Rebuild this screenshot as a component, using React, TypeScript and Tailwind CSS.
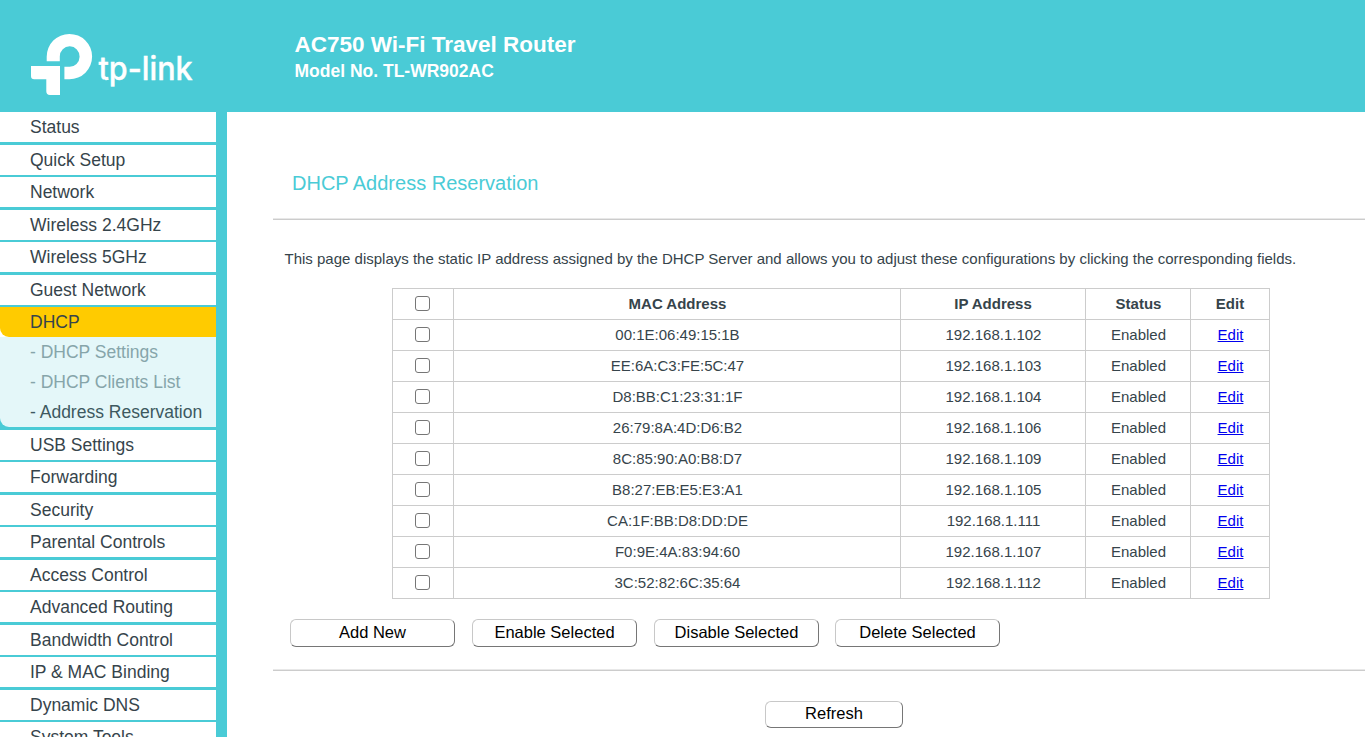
type NavEntry = { label: string; gap: string };

const navTop: NavEntry[] = [
  { label: 'Status', gap: 'mb-[3px]' },
  { label: 'Quick Setup', gap: 'mb-[2px]' },
  { label: 'Network', gap: 'mb-[3px]' },
  { label: 'Wireless 2.4GHz', gap: 'mb-[2px]' },
  { label: 'Wireless 5GHz', gap: 'mb-[3px]' },
  { label: 'Guest Network', gap: 'mb-[2px]' },
];

const navBottom: NavEntry[] = [
  { label: 'USB Settings', gap: 'mb-[2px]' },
  { label: 'Forwarding', gap: 'mb-[3px]' },
  { label: 'Security', gap: 'mb-[2px]' },
  { label: 'Parental Controls', gap: 'mb-[3px]' },
  { label: 'Access Control', gap: 'mb-[2px]' },
  { label: 'Advanced Routing', gap: 'mb-[3px]' },
  { label: 'Bandwidth Control', gap: 'mb-[2px]' },
  { label: 'IP & MAC Binding', gap: 'mb-[3px]' },
  { label: 'Dynamic DNS', gap: 'mb-[2px]' },
  { label: 'System Tools', gap: 'mb-[3px]' },
];

const reservations = [
  ['00:1E:06:49:15:1B', '192.168.1.102'],
  ['EE:6A:C3:FE:5C:47', '192.168.1.103'],
  ['D8:BB:C1:23:31:1F', '192.168.1.104'],
  ['26:79:8A:4D:D6:B2', '192.168.1.106'],
  ['8C:85:90:A0:B8:D7', '192.168.1.109'],
  ['B8:27:EB:E5:E3:A1', '192.168.1.105'],
  ['CA:1F:BB:D8:DD:DE', '192.168.1.111'],
  ['F0:9E:4A:83:94:60', '192.168.1.107'],
  ['3C:52:82:6C:35:64', '192.168.1.112'],
];

function Logo() {
  return (
    <svg width="170" height="66" viewBox="28 32 170 66" fill="#fff" className="block">
      <path d="M46.7 61.3V56.7A22.7 22.7 0 1 1 69.4 79.3H64.4V66.7H69.4A9.9 10.2 0 1 0 59.8 56.5V61.3Z" />
      <path d="M31 66H60V95H50Q46.3 95 46.3 91.3V79.3H34.2Q31 79.3 31 76Z" />
      <text
        x="98.5"
        y="79.5"
        fontSize="32"
        fontWeight="500"
        stroke="#fff"
        strokeWidth="0.4"
        textLength="94"
        lengthAdjust="spacingAndGlyphs"
        fontFamily="Inter, sans-serif"
      >
        tp-link
      </text>
    </svg>
  );
}

function NavItem({ label, gap }: NavEntry) {
  return (
    <li className={`h-[30px] shrink-0 bg-white pl-[30px] leading-[30px] ${gap}`}>
      <a href="#">{label}</a>
    </li>
  );
}

function Checkbox() {
  return (
    <input
      type="checkbox"
      className="mr-auto mb-px ml-[22px] block size-[15px] appearance-none rounded-[3px] border border-[#767676] bg-white"
    />
  );
}

function Divider() {
  return <div className="h-[2px] border-t border-b border-t-[#e8e8e8] border-b-[#cccccc]" />;
}

function Button({ label, size }: { label: string; size: string }) {
  return (
    <button
      className={`rounded-[6px] border border-t-[#c8c8c8] border-r-[#767676] border-b-[#767676] border-l-[#c8c8c8] bg-white text-[16.5px] leading-none text-black ${size}`}
    >
      {label}
    </button>
  );
}

const cell = 'border border-[#cccccc] p-0 text-center';
const textCell = 'border border-[#cccccc] p-0 pl-px text-center';

export default function App() {
  return (
    <div className="flex h-[737px] w-[1365px] flex-col overflow-hidden bg-white font-['Liberation_Sans',Arial,sans-serif] text-[#36444b]">
      <header className="flex h-28 shrink-0 bg-[#4acbd6] text-white">
        <div className="w-[294.5px] shrink-0 pt-8 pl-7">
          <Logo />
        </div>
        <div className="pt-[31px] font-bold">
          <h1 className="text-[22.5px] leading-[27px]">AC750 Wi-Fi Travel Router</h1>
          <h2 className="pt-px text-[17.5px] leading-6">Model No. TL-WR902AC</h2>
        </div>
      </header>

      <div className="flex min-h-0 flex-1">
        <nav className="w-[227px] shrink-0 overflow-hidden bg-[#4acbd6] pr-[11px] text-[17.5px]">
          <ul className="flex flex-col">
            {navTop.map((item) => (
              <NavItem key={item.label} {...item} />
            ))}
            <li className="mb-[3px]">
              <div className="bg-white">
                <a href="#" className="block h-[30px] rounded-bl-[9px] bg-[#ffcb00] pl-[30px] leading-[30px]">
                  DHCP
                </a>
              </div>
              <ul className="rounded-bl-[9px] bg-[#e4f7f9] leading-[30px] text-[#86a5aa]">
                <li className="h-[30px] pl-[30px]">- DHCP Settings</li>
                <li className="h-[30px] pl-[30px]">- DHCP Clients List</li>
                <li className="h-[30px] pl-[30px] text-[#3d5960]">- Address Reservation</li>
              </ul>
            </li>
            {navBottom.map((item) => (
              <NavItem key={item.label} {...item} />
            ))}
          </ul>
        </nav>

        <main className="flex flex-1 flex-col pl-[46px]">
          <h3 className="mt-[56px] h-[50px] pl-[19px] text-xl leading-[30px] text-[#4acbd6]">
            DHCP Address Reservation
          </h3>
          <Divider />
          <p className="mt-[28px] h-[40px] pl-[11.5px] text-[15px] leading-[22px] whitespace-nowrap">
            This page displays the static IP address assigned by the DHCP Server and allows you to adjust these
            configurations by clicking the corresponding fields.
          </p>
          <table className="ml-[119px] w-[878px] table-fixed border-collapse text-[15px] leading-5">
            <colgroup>
              <col className="w-[61px]" />
              <col className="w-[447px]" />
              <col className="w-[185px]" />
              <col className="w-[105px]" />
              <col className="w-[79px]" />
            </colgroup>
            <thead>
              <tr className="h-[31px]">
                <th className={cell}>
                  <Checkbox />
                </th>
                <th className={textCell}>MAC Address</th>
                <th className={cell}>IP Address</th>
                <th className={textCell}>Status</th>
                <th className={cell}>Edit</th>
              </tr>
            </thead>
            <tbody>
              {reservations.map(([mac, ip]) => (
                <tr key={mac} className="h-[31px]">
                  <td className={cell}>
                    <Checkbox />
                  </td>
                  <td className={textCell}>{mac}</td>
                  <td className={textCell}>{ip}</td>
                  <td className={textCell}>Enabled</td>
                  <td className={textCell}>
                    <a href="#" className="text-[#0000ee] underline">
                      Edit
                    </a>
                  </td>
                </tr>
              ))}
            </tbody>
          </table>
          <div className="mt-5 mb-[22px] flex gap-[17px] pl-[17px]">
            <Button label="Add New" size="h-7 w-[165px] pb-px" />
            <Button label="Enable Selected" size="h-7 w-[165px] pb-px" />
            <Button label="Disable Selected" size="h-7 w-[165px] pb-px" />
            <Button label="Delete Selected" size="-ml-px h-7 w-[165px] pb-px" />
          </div>
          <Divider />
          <div className="mt-[30px] pl-[492px]">
            <Button label="Refresh" size="h-[27px] w-[138px] pb-[3px]" />
          </div>
        </main>
      </div>
    </div>
  );
}
